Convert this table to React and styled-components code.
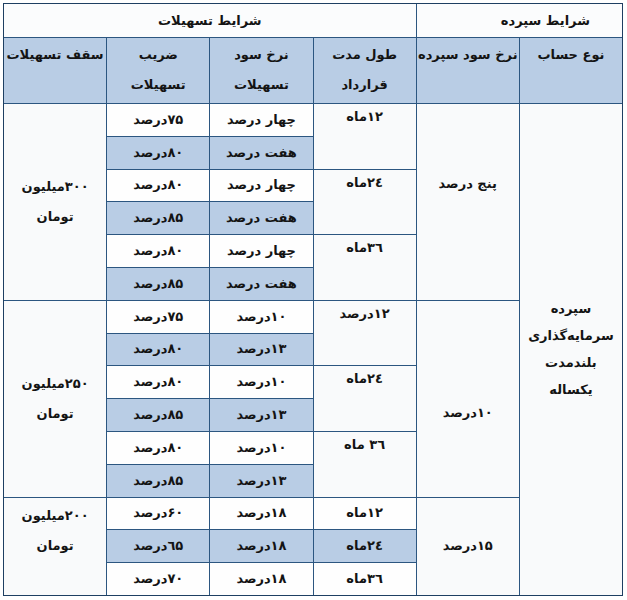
import React from "react";
import styled, { createGlobalStyle } from "styled-components";

const GlobalStyle = createGlobalStyle`
    body {
        margin: 0;
        background: #ffffff;
        font-family: "DejaVu Sans", sans-serif;
    }
`;

const groups = [
    {
        cap: ["۳۰۰میلیون", "تومان"],
        capPad: 0,
        capCenter: true,
        rate: "پنج درصد",
        ratePad: 70,
        terms: [
            { term: "۱۲ماه", rows: [["چهار درصد", "۷۵درصد"], ["هفت درصد", "۸۰درصد"]] },
            { term: "۲٤ماه", rows: [["چهار درصد", "۸۰درصد"], ["هفت درصد", "۸۵درصد"]] },
            { term: "۳٦ماه", rows: [["چهار درصد", "۸۰درصد"], ["هفت درصد", "۸۵درصد"]] },
        ],
    },
    {
        cap: ["۲۵۰میلیون", "تومان"],
        capPad: 0,
        capCenter: true,
        rate: "۱۰درصد",
        ratePad: 102,
        terms: [
            { term: "۱۲درصد", rows: [["۱۰درصد", "۷۵درصد"], ["۱۳درصد", "۸۰درصد"]] },
            { term: "۲٤ماه", rows: [["۱۰درصد", "۸۰درصد"], ["۱۳درصد", "۸۵درصد"]] },
            { term: "۳٦ ماه", rows: [["۱۰درصد", "۸۰درصد"], ["۱۳درصد", "۸۵درصد"]] },
        ],
    },
    {
        cap: ["۲۰۰میلیون", "تومان"],
        capPad: 3,
        capCenter: false,
        rate: "۱۵درصد",
        ratePad: 0,
        terms: [
            { term: "۱۲ماه", rows: [["۱۸درصد", "۶۰درصد"]] },
            { term: "۲٤ماه", rows: [["۱۸درصد", "٦۵درصد"]], blue: true },
            { term: "۳٦ماه", rows: [["۱۸درصد", "۷۰درصد"]] },
        ],
    },
];

function App() {
    const cells = [];
    let row = 3;

    groups.forEach((g, gi) => {
        const groupStart = row;
        const groupRows = g.terms.reduce((n, t) => n + t.rows.length, 0);

        cells.push(
            <Cell key={`cap${gi}`} $row={groupStart} $col={6} $span={groupRows} $tone="soft" $center={g.capCenter} $pad={g.capPad}>
                <Lines $lh={30}>
                    {g.cap.map((l) => <span key={l}>{l}</span>)}
                </Lines>
            </Cell>
        );
        cells.push(
            <Cell key={`rate${gi}`} $row={groupStart} $col={2} $span={groupRows} $tone="soft" $center={!g.ratePad} $pad={g.ratePad}>
                {g.rate}
            </Cell>
        );

        g.terms.forEach((t, ti) => {
            const single = t.rows.length === 1;
            cells.push(
                <Cell
                    key={`term${gi}-${ti}`}
                    $row={row}
                    $col={3}
                    $span={t.rows.length}
                    $tone={t.blue ? "blue" : single ? "white" : "soft"}
                    $center={single}
                    $pad={single ? 0 : 3}
                >
                    {t.term}
                </Cell>
            );
            t.rows.forEach((r, ri) => {
                const tone = t.blue || (!single && ri === 1) ? "blue" : "white";
                cells.push(
                    <Cell key={`r${row}a`} $row={row} $col={4} $tone={tone} $center>
                        {r[0]}
                    </Cell>
                );
                cells.push(
                    <Cell key={`r${row}b`} $row={row} $col={5} $tone={tone} $center>
                        {r[1]}
                    </Cell>
                );
                row += 1;
            });
        });
    });

    return (
        <Page>
            <GlobalStyle />
            <Grid>
                <TopHeader $col={1} $colSpan={2} $align="right">شرایط سپرده</TopHeader>
                <TopHeader $col={3} $colSpan={4} $align="center">شرایط تسهیلات</TopHeader>

                <HeadCell $col={1}>نوع حساب</HeadCell>
                <HeadCell $col={2}>نرخ سود سپرده</HeadCell>
                <HeadCell $col={3}>
                    <Lines $lh={30}><span>طول مدت</span><span>قرارداد</span></Lines>
                </HeadCell>
                <HeadCell $col={4}>
                    <Lines $lh={30}><span>نرخ سود</span><span>تسهیلات</span></Lines>
                </HeadCell>
                <HeadCell $col={5}>
                    <Lines $lh={30}><span>ضریب</span><span>تسهیلات</span></Lines>
                </HeadCell>
                <HeadCell $col={6}>سقف تسهیلات</HeadCell>

                <Cell $row={3} $col={1} $span={15} $tone="soft" $center>
                    <Lines $lh={27}>
                        <span>سپرده</span>
                        <span>سرمایه‌گذاری</span>
                        <span>بلندمدت</span>
                        <span>یکساله</span>
                    </Lines>
                </Cell>

                {cells}
            </Grid>
        </Page>
    );
}

const Page = styled.div`
    padding: 3px 0 0 3px;
`;

const Grid = styled.div`
    direction: rtl;
    width: 618px;
    display: grid;
    grid-template-columns: repeat(6, 1fr);
    grid-template-rows: 33px 65px repeat(15, 31.8px);
    gap: 1px;
    background: #2c5680;
    border: 1px solid #1e3f62;
    color: #141414;
    font-weight: bold;
    font-size: 13px;
`;

const TopHeader = styled.div`
    grid-row: 1;
    grid-column: ${(p) => p.$col} / span ${(p) => p.$colSpan};
    background: #fbfcfd;
    display: flex;
    align-items: center;
    justify-content: ${(p) => (p.$align === "right" ? "flex-start" : "center")};
    padding-right: ${(p) => (p.$align === "right" ? "32px" : "0")};
    font-size: 13px;
`;

const HeadCell = styled.div`
    grid-row: 2;
    grid-column: ${(p) => p.$col};
    background: #b9cde5;
    display: flex;
    justify-content: center;
    align-items: flex-start;
    padding-top: 2px;
    line-height: 30px;
    font-size: 13px;
`;

const tones = {
    white: "#fefefe",
    soft: "#f9fafb",
    blue: "#b9cde5",
};

const Cell = styled.div`
    grid-row: ${(p) => p.$row} / span ${(p) => p.$span || 1};
    grid-column: ${(p) => p.$col};
    background: ${(p) => tones[p.$tone]};
    display: flex;
    justify-content: center;
    align-items: ${(p) => (p.$center ? "center" : "flex-start")};
    padding-top: ${(p) => p.$pad || 0}px;
    line-height: 20px;
    white-space: nowrap;
`;

const Lines = styled.div`
    display: flex;
    flex-direction: column;
    align-items: center;
    line-height: ${(p) => p.$lh}px;
`;

export default App;
